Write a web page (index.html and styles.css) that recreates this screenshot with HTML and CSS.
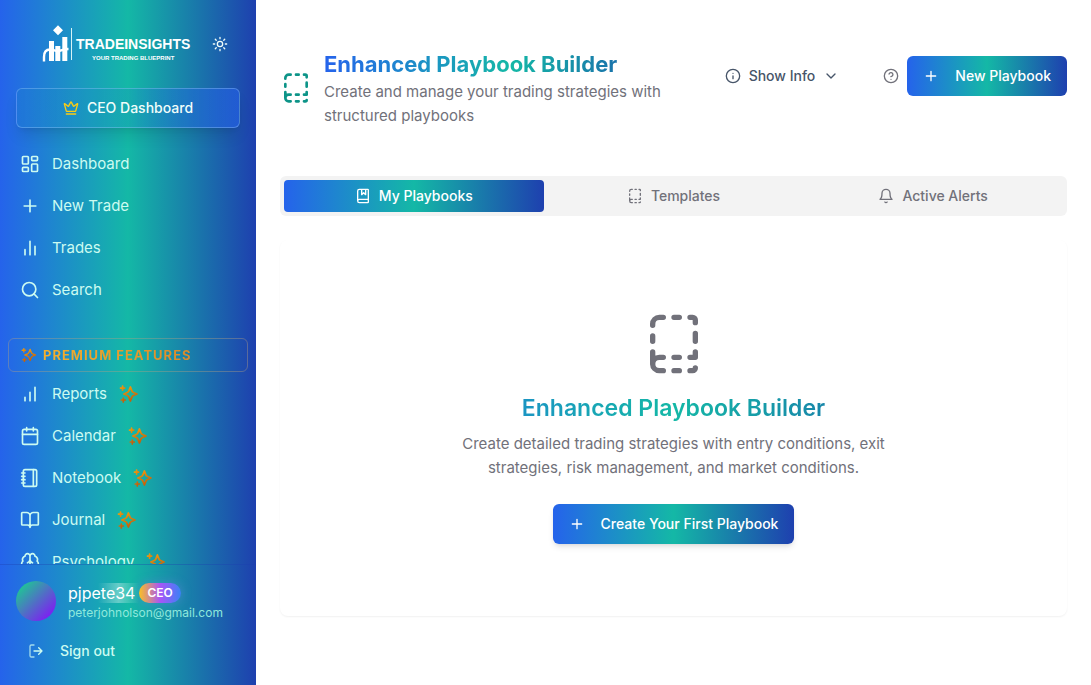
FILE: index.html
```html
<!DOCTYPE html>
<html lang="en">
<head>
<meta charset="utf-8">
<meta name="viewport" content="width=device-width, initial-scale=1">
<title>TradeInsights – Playbook Builder</title>
<link rel="stylesheet" href="styles.css">
</head>
<body>
<svg class="defs" aria-hidden="true">
  <defs>
    <linearGradient id="amber" x1="0" y1="0" x2="0.4" y2="1">
      <stop offset="0" stop-color="#f59e0b"/><stop offset="1" stop-color="#c2620e"/>
    </linearGradient>
    <symbol id="sparkle" viewBox="0 0 20 20">
      <g fill="none" stroke="url(#amber)" stroke-linejoin="round" stroke-linecap="round">
        <path stroke-width="1.8" d="M11.400 3l1.500 3.900c.3.8.8 1.300 1.600 1.600l3.500 1.500-3.500 1.500c-.8.3-1.300.8-1.600 1.600L11.400 17l-1.500-3.900c-.3-.8-.8-1.300-1.600-1.600L4.900 10l3.400-1.500c.8-.3 1.300-.8 1.600-1.600z"/>
        <path stroke-width="1.700" d="M3.600 2v4.200M1.500 4.100h4.200M4.300 14v4M2.300 16h4"/>
      </g>
    </symbol>
    <symbol id="plus" viewBox="0 0 24 24"><path d="M5 12h14M12 5v14"/></symbol>
    <symbol id="book-dashed" viewBox="0 0 24 24">
      <path d="M20 21a1 1 0 0 1-1 1h-1M20 15v2h-2M4 19.500V15M20 8v3M18 2h1a1 1 0 0 1 1 1v1M4 11V9M12 2h2M12 22h2M12 17h2M8 22H6.500a2.500 2.500 0 0 1 0-5H8M4 5v-.5A2.500 2.500 0 0 1 6.500 2H8"/>
    </symbol>
  </defs>
</svg>
<div class="app">
  <aside class="sidebar">
    <div class="sidebar-head">
      <div class="brand-row">
        <div class="brand">
          <svg class="brand-mark" viewBox="0 0 30 40" aria-hidden="true">
            <path fill="#fff" d="M16 1.200l5 5-5 5-5-5zM7 17h5v20H7zM13.300 22h5v15h-5zM20.300 13h5v24h-5z"/>
            <path fill="none" stroke="#fff" stroke-width="2.400" d="M2 37.500V33c0-5 2.500-7.500 6-7.500 4 0 4.500 1.500 8 1.500s5-2 10.500-2"/>
            <path stroke="#d7f3f5" stroke-width="1" d="M29.500 4v32"/>
          </svg>
          <div class="brand-text">
            <span class="brand-name">TRADEINSIGHTS</span>
            <span class="brand-tag">YOUR TRADING BLUEPRINT</span>
          </div>
        </div>
        <button class="theme-toggle" aria-label="Toggle theme">
          <svg class="icon icon-sm" viewBox="0 0 24 24"><circle cx="12" cy="12" r="4"/><path d="M12 2v2M12 20v2M4.930 4.930l1.410 1.410M17.660 17.660l1.410 1.410M2 12h2M20 12h2M6.340 17.660l-1.410 1.410M19.070 4.930l-1.410 1.410"/></svg>
        </button>
      </div>
      <button class="ceo-button">
        <svg class="icon icon-sm crown" viewBox="0 0 24 24"><path d="M11.562 3.266a.5.5 0 0 1 .876 0L15.390 8.870a1 1 0 0 0 1.516.294L21.183 5.500a.5.5 0 0 1 .798.519l-2.834 10.246a1 1 0 0 1-.956.734H5.810a1 1 0 0 1-.957-.734L2.020 6.020a.5.5 0 0 1 .798-.519l4.276 3.664a1 1 0 0 0 1.516-.294zM5 21h14"/></svg>
        CEO Dashboard
      </button>
    </div>
    <nav class="nav">
      <a class="nav-link" href="#"><svg class="icon" viewBox="0 0 24 24"><rect width="7" height="9" x="3" y="3" rx="1"/><rect width="7" height="5" x="14" y="3" rx="1"/><rect width="7" height="9" x="14" y="12" rx="1"/><rect width="7" height="5" x="3" y="16" rx="1"/></svg>Dashboard</a>
      <a class="nav-link" href="#"><svg class="icon"><use href="#plus"/></svg>New Trade</a>
      <a class="nav-link" href="#"><svg class="icon" viewBox="0 0 24 24"><path d="M18 20V10M12 20V4M6 20v-6"/></svg>Trades</a>
      <a class="nav-link" href="#"><svg class="icon" viewBox="0 0 24 24"><circle cx="11" cy="11" r="8"/><path d="m21 21-4.300-4.300"/></svg>Search</a>
      <div class="premium">
        <svg class="spark spark-sm"><use href="#sparkle"/></svg>
        <span class="premium-label">PREMIUM FEATURES</span>
      </div>
      <a class="nav-link" href="#"><svg class="icon" viewBox="0 0 24 24"><path d="M12 20V10M18 20V4M6 20v-4"/></svg>Reports<svg class="spark"><use href="#sparkle"/></svg></a>
      <a class="nav-link" href="#"><svg class="icon" viewBox="0 0 24 24"><path d="M8 2v4M16 2v4M3 10h18"/><rect width="18" height="18" x="3" y="4" rx="2"/></svg>Calendar<svg class="spark"><use href="#sparkle"/></svg></a>
      <a class="nav-link" href="#"><svg class="icon" viewBox="0 0 24 24"><path d="M2 6h4M2 10h4M2 14h4M2 18h4M16 2v20"/><rect width="16" height="20" x="4" y="2" rx="2"/></svg>Notebook<svg class="spark"><use href="#sparkle"/></svg></a>
      <a class="nav-link" href="#"><svg class="icon" viewBox="0 0 24 24"><path d="M12 7v14M3 18a1 1 0 0 1-1-1V4a1 1 0 0 1 1-1h5a4 4 0 0 1 4 4 4 4 0 0 1 4-4h5a1 1 0 0 1 1 1v13a1 1 0 0 1-1 1h-6a3 3 0 0 0-3 3 3 3 0 0 0-3-3z"/></svg>Journal<svg class="spark"><use href="#sparkle"/></svg></a>
      <a class="nav-link" href="#"><svg class="icon" viewBox="0 0 24 24"><path d="M12 5a3 3 0 1 0-5.997.125 4 4 0 0 0-2.526 5.770 4 4 0 0 0 .556 6.588A4 4 0 1 0 12 18ZM12 5a3 3 0 1 1 5.997.125 4 4 0 0 1 2.526 5.770 4 4 0 0 1-.556 6.588A4 4 0 1 1 12 18ZM15 13a4.500 4.500 0 0 1-3-4 4.500 4.500 0 0 1-3 4"/></svg>Psychology<svg class="spark"><use href="#sparkle"/></svg></a>
    </nav>
    <div class="account">
      <div class="profile">
        <div class="avatar"></div>
        <div class="identity">
          <div class="name-row"><span class="user-name">pjpete34</span><span class="badge">CEO</span></div>
          <span class="email">peterjohnolson@gmail.com</span>
        </div>
      </div>
      <button class="sign-out">
        <svg class="icon icon-sm" viewBox="0 0 24 24"><path opacity=".75" d="M9 21H5a2 2 0 0 1-2-2V5a2 2 0 0 1 2-2h4"/><path d="m16 17 5-5-5-5M21 12H9"/></svg>
        Sign out
      </button>
    </div>
  </aside>
  <main class="main">
    <header class="page-head">
      <div class="page-title">
        <svg class="icon icon-lg"><use href="#book-dashed"/></svg>
        <div>
          <h1 class="title gradient-text">Enhanced Playbook Builder</h1>
          <p class="lead">Create and manage your trading strategies with structured playbooks</p>
        </div>
      </div>
      <div class="actions">
        <button class="show-info">
          <svg class="icon icon-sm" viewBox="0 0 24 24"><circle cx="12" cy="12" r="10"/><path d="M12 16v-4M12 8h.01"/></svg>
          Show Info
          <svg class="icon icon-sm" viewBox="0 0 24 24"><path d="m6 9 6 6 6-6"/></svg>
        </button>
        <button class="help" aria-label="Help">
          <svg class="icon icon-sm" viewBox="0 0 24 24"><circle cx="12" cy="12" r="10"/><path d="M9.090 9a3 3 0 0 1 5.830 1c0 2-3 3-3 3M12 17h.01"/></svg>
        </button>
        <button class="primary"><svg class="icon icon-sm"><use href="#plus"/></svg>New Playbook</button>
      </div>
    </header>
    <div class="tabs" role="tablist">
      <button class="tab tab-active" role="tab" aria-selected="true"><svg class="icon icon-sm" viewBox="0 0 24 24"><path d="M10 2v8l3-3 3 3V2M4 19.500v-15A2.500 2.500 0 0 1 6.500 2H19a1 1 0 0 1 1 1v18a1 1 0 0 1-1 1H6.500a1 1 0 0 1 0-5H20"/></svg>My Playbooks</button>
      <button class="tab" role="tab" aria-selected="false"><svg class="icon icon-sm"><use href="#book-dashed"/></svg>Templates</button>
      <button class="tab" role="tab" aria-selected="false"><svg class="icon icon-sm" viewBox="0 0 24 24"><path d="M6 8a6 6 0 0 1 12 0c0 7 3 9 3 9H3s3-2 3-9M10.300 21a1.940 1.940 0 0 0 3.400 0"/></svg>Active Alerts</button>
    </div>
    <section class="card">
      <svg class="icon icon-xl"><use href="#book-dashed"/></svg>
      <h2 class="card-title gradient-text">Enhanced Playbook Builder</h2>
      <p class="card-text">Create detailed trading strategies with entry conditions, exit strategies, risk management, and market conditions.</p>
      <button class="primary raised"><svg class="icon icon-sm"><use href="#plus"/></svg>Create Your First Playbook</button>
    </section>
  </main>
</div>
</body>
</html>
```
FILE: styles.css
```css
:root {
  --brand: linear-gradient(90deg, #2563eb, #14b8a6 50%, #1e40af);
  --muted: #71717a;
}
* { box-sizing: border-box; }
body {
  margin: 0;
  font-family: Inter, "Liberation Sans", sans-serif;
  font-size: 15px;
  line-height: 24px;
  background: #fff;
  color: var(--muted);
}
button {
  font: inherit;
  font-size: 14px;
  font-weight: 500;
  line-height: 20px;
  color: inherit;
  background: none;
  border: 0;
  padding: 0;
  white-space: nowrap;
}
h1, h2, p { margin: 0; }
.defs { position: absolute; width: 0; height: 0; }
.icon {
  width: 20px;
  height: 20px;
  flex: none;
  fill: none;
  stroke: currentColor;
  stroke-width: 2;
  stroke-linecap: round;
  stroke-linejoin: round;
}
.icon-sm { width: 16px; height: 16px; }
.icon-lg { width: 32px; height: 32px; color: #0d9488; }
.icon-xl { width: 64px; height: 64px; }

.app { display: flex; height: 100vh; }

.sidebar {
  width: 256px;
  flex: none;
  display: flex;
  flex-direction: column;
  background: var(--brand);
  color: #ccfbf1;
}
.sidebar-head { padding: 16px 16px 8px; }
.brand-row {
  display: flex;
  align-items: center;
  height: 56px;
  margin-bottom: 16px;
  padding: 0 12px 0 26px;
  justify-content: space-between;
}
.brand { display: flex; align-items: center; gap: 4px; }
.brand-mark { width: 30px; height: 40px; flex: none; }
.brand-text {
  display: flex;
  flex-direction: column;
  align-items: center;
  font-family: "Liberation Sans", Arial, sans-serif;
  font-weight: 700;
  color: #fff;
  padding-top: 12px;
}
.brand-name { font-size: 14px; line-height: 16px; }
.brand-tag { font-size: 6px; line-height: 12px; }
.theme-toggle { display: flex; color: #f0fdfa; }
.ceo-button {
  width: 100%;
  height: 40px;
  display: flex;
  align-items: center;
  justify-content: center;
  gap: 8px;
  color: #f0fdfa;
  border: 1px solid rgba(147, 197, 253, .4);
  border-radius: 6px;
  background: linear-gradient(90deg, rgba(20, 150, 180, .15), rgba(37, 99, 235, .12) 50%, rgba(37, 99, 235, .6));
  box-shadow: 0 10px 15px -3px rgba(0, 0, 0, .1), 0 4px 6px -4px rgba(0, 0, 0, .1);
}
.crown { color: #facc15; }

.nav {
  flex: 1;
  min-height: 0;
  overflow-y: auto;
  scrollbar-width: none;
  display: flex;
  flex-direction: column;
  gap: 2px;
  padding: 8px;
}
.nav-link {
  display: flex;
  align-items: center;
  flex: none;
  gap: 12px;
  height: 40px;
  padding: 0 12px;
  color: inherit;
  text-decoration: none;
}
.spark { width: 20px; height: 20px; flex: none; }
.spark-sm { width: 16px; height: 16px; }
.premium {
  flex: none;
  display: flex;
  align-items: center;
  gap: 6px;
  height: 34px;
  margin-top: 26px;
  padding: 0 12px;
  border: 1px solid rgba(180, 160, 130, .4);
  border-radius: 6px;
}
.premium-label {
  font-size: 13px;
  line-height: 20px;
  font-weight: 700;
  letter-spacing: 1px;
  color: #e2a136;
  background: linear-gradient(90deg, #f5b02e, #d98a2b);
  background-clip: text;
  -webkit-text-fill-color: transparent;
}

.account { padding: 16px; border-top: 1px solid rgba(30, 64, 175, .35); }
.profile { display: flex; align-items: center; gap: 12px; }
.avatar {
  width: 40px;
  height: 40px;
  border-radius: 50%;
  background: linear-gradient(135deg, #10e086, #7c22f0 85%);
}
.identity { display: flex; flex-direction: column; }
.name-row { display: flex; align-items: center; gap: 4px; }
.user-name { font-size: 16px; color: #fff; }
.badge {
  position: relative;
  padding: 0 8px;
  border-radius: 10px;
  font-size: 12px;
  line-height: 20px;
  font-weight: 600;
  color: #fff;
  background: linear-gradient(90deg, #fbbf24, #a855f7 50%, #3b82f6);
  box-shadow: 0 0 8px 2px rgba(96, 130, 220, .4);
}
.badge::before {
  content: "";
  position: absolute;
  top: 0;
  right: 100%;
  width: 100%;
  height: 100%;
  background: linear-gradient(90deg, transparent, rgba(255, 255, 255, .35), transparent);
}
.email { font-size: 12px; line-height: 16px; color: #8fe9dc; }
.sign-out {
  display: flex;
  align-items: center;
  gap: 16px;
  height: 36px;
  margin-top: 12px;
  padding: 0 12px;
}

.main { flex: 1; min-width: 0; padding: 48px 24px 24px; }
.page-head {
  display: flex;
  align-items: flex-start;
  gap: 16px;
  margin-bottom: 48px;
}
.page-title { flex: 1; display: flex; align-items: center; gap: 12px; }
.title { font-size: 22px; line-height: 32px; font-weight: 700; }
.card-title { font-size: 23px; line-height: 32px; font-weight: 600; }
.gradient-text {
  background: var(--brand);
  background-clip: text;
  -webkit-text-fill-color: transparent;
}
.actions { display: flex; align-items: center; gap: 8px; padding-top: 8px; }
.show-info {
  display: flex;
  align-items: center;
  gap: 8px;
  padding: 0 12px;
  margin-right: 24px;
  color: #475569;
}
.help { display: flex; }
.primary {
  display: inline-flex;
  align-items: center;
  gap: 16px;
  height: 40px;
  padding: 0 16px;
  border-radius: 6px;
  background: var(--brand);
  color: #fff;
}
.raised { box-shadow: 0 4px 6px -1px rgba(0, 0, 0, .1), 0 2px 4px -2px rgba(0, 0, 0, .1); }
.tabs {
  display: grid;
  grid-template-columns: repeat(3, 1fr);
  padding: 4px;
  margin-bottom: 24px;
  border-radius: 6px;
  background: #f3f3f3;
}
.tab {
  display: flex;
  align-items: center;
  justify-content: center;
  gap: 8px;
  height: 32px;
  border-radius: 4px;
}
.tab-active { background: var(--brand); color: #fff; }
.card {
  display: flex;
  flex-direction: column;
  align-items: center;
  padding: 72px 24px;
  border-radius: 8px;
  box-shadow: 0 1px 2px rgba(0, 0, 0, .06);
  text-align: center;
}
.card-title { align-self: stretch; margin: 16px 0 8px; }
.card-text { max-width: 448px; margin-bottom: 24px; }
```
